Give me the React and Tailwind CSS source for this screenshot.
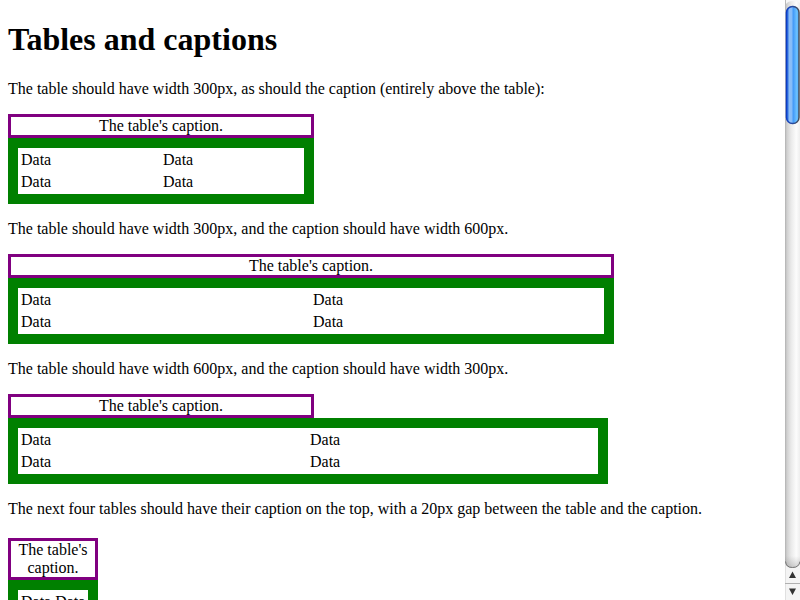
function CaptionedTable({ tableClass, captionClass }) {
  return (
    <table
      className={`border-separate border-spacing-[2px] border-10 border-[#008000] ${tableClass}`}
    >
      <caption className={`border-3 border-[#800080] text-center ${captionClass}`}>
        The table's caption.
      </caption>
      <tbody>
        {[0, 1].map((row) => (
          <tr key={row}>
            <td className="p-px">Data</td>
            <td className="p-px">Data</td>
          </tr>
        ))}
      </tbody>
    </table>
  );
}

function Scrollbar() {
  return (
    <svg className="block h-full w-[15px] shrink-0" aria-hidden="true">
      <defs>
        <linearGradient id="track">
          <stop offset="0" stopColor="#b0b0b0" />
          <stop offset="0.12" stopColor="#cfcfcf" />
          <stop offset="0.4" stopColor="#e9e9e9" />
          <stop offset="0.75" stopColor="#fcfcfc" />
          <stop offset="1" stopColor="#eeeeee" />
        </linearGradient>
        <linearGradient id="thumb">
          <stop offset="0" stopColor="#1450d8" />
          <stop offset="0.12" stopColor="#3f80e8" />
          <stop offset="0.22" stopColor="#8fbff6" />
          <stop offset="0.4" stopColor="#86bdfa" />
          <stop offset="0.55" stopColor="#459bf8" />
          <stop offset="0.8" stopColor="#68bfff" />
          <stop offset="1" stopColor="#57b0f8" />
        </linearGradient>
        <linearGradient id="thumbEdge">
          <stop offset="0" stopColor="#0c3cc4" />
          <stop offset="0.5" stopColor="#2a4c9c" />
          <stop offset="1" stopColor="#4a4d55" />
        </linearGradient>
        <linearGradient id="capShade" x2="0" y2="1">
          <stop offset="0" stopColor="#777" stopOpacity="0" />
          <stop offset="1" stopColor="#777" stopOpacity="0.35" />
        </linearGradient>
      </defs>
      <rect width="15" height="100%" fill="url(#track)" />
      <path d="M1 0H15V3Q13 1 8 1T1 4Z" fill="#f8f8f8" />
      <rect x="1.500" y="6.500" width="12.500" height="117" rx="6" fill="url(#thumb)" stroke="url(#thumbEdge)" strokeWidth="1.500" />
      <svg y="100%" overflow="visible">
        <rect y="-44" width="15" height="12" fill="url(#capShade)" />
        <path d="M0-38Q1-32 7.500-32T15-38V0H0Z" fill="#f4f4f4" />
        <path d="M0-36V0" stroke="#ccc" />
        <path d="M.5-38.500Q1-32.500 7.500-32.500T15-38.500" fill="none" stroke="#777" />
        <path d="M0-16.500H15" stroke="#b0b0b0" />
        <path d="M4-22L7.500-28.500L11-22ZM4-11.500L7.500-5L11-11.500Z" fill="#333" />
      </svg>
    </svg>
  );
}

export default function App() {
  return (
    <div className="flex h-screen overflow-hidden bg-white font-['Liberation_Serif',serif] text-base leading-[18px] text-black">
      <main className="min-w-0 flex-1 overflow-hidden px-2">
        <h1 className="mt-[21px] mb-[22px] text-[32px] leading-[37px] font-bold">
          Tables and captions
        </h1>
        <p className="my-4">
          The table should have width 300px, as should the caption (entirely above the table):
        </p>
        <CaptionedTable tableClass="w-[306px]" captionClass="w-[306px]" />
        <p className="my-4">
          The table should have width 300px, and the caption should have width 600px.
        </p>
        <CaptionedTable tableClass="w-[606px]" captionClass="w-[606px]" />
        <p className="my-4">
          The table should have width 600px, and the caption should have width 300px.
        </p>
        <CaptionedTable tableClass="w-[600px]" captionClass="w-[306px]" />
        <p className="mt-4 mb-5">
          The next four tables should have their caption on the top, with a 20px gap between the
          table and the caption.
        </p>
        <CaptionedTable tableClass="w-[90px]" captionClass="w-[90px]" />
      </main>
      <Scrollbar />
    </div>
  );
}
